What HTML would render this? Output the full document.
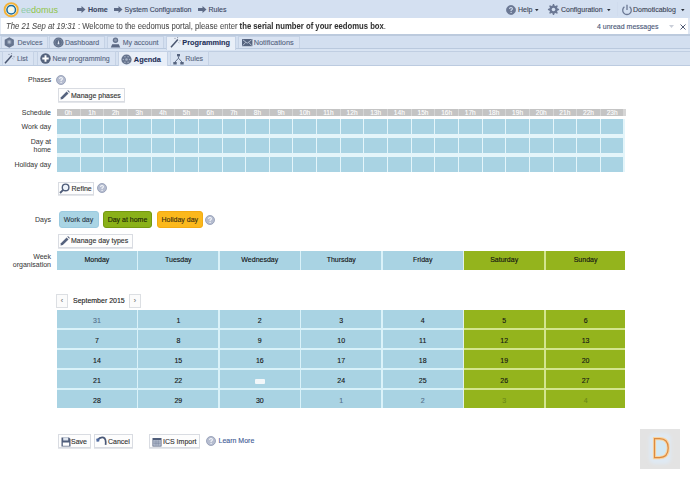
<!DOCTYPE html>
<html><head><meta charset="utf-8"><style>
*{box-sizing:border-box;margin:0;padding:0}
html,body{width:690px;height:479px;overflow:hidden;background:#fff}
body{position:relative;font-family:"Liberation Sans",sans-serif;font-size:7px;color:#333;-webkit-text-stroke:0.12px currentColor}
.a{position:absolute;white-space:nowrap}
svg{position:absolute;overflow:visible}
.tab{position:absolute;background:#d9e3f2;border:1px solid #c5d2e5;border-bottom:none;color:#55637f;-webkit-text-stroke:0.1px currentColor}
.tab span{position:absolute;top:2px;white-space:nowrap}
.tab.act{background:#e9eff8;color:#1f2f58;font-weight:bold}
.lbl{position:absolute;text-align:right;color:#3c3c3c;white-space:nowrap;right:639px;-webkit-text-stroke:0.05px currentColor}
.btn{position:absolute;height:14px;border:1px solid #d9dce2;background:#fdfdfd;color:#333;box-shadow:0 0.5px 0.5px #e4e6ea}
.btn span{position:absolute;top:2.5px;white-space:nowrap}
.help{position:absolute;width:10px;height:10px}
</style></head><body>
<div class="a" style="left:0;top:0;width:690px;height:18px;background:#d4e0f1"></div>
<svg style="left:3px;top:1.5px" width="16" height="16" viewBox="0 0 16 16"><circle cx="8.2" cy="7.7" r="6.6" fill="#fdf6e0" stroke="#f3b23a" stroke-width="1.9"/><circle cx="8.2" cy="7.7" r="4.3" fill="#e6f6fc" stroke="#1d6a9a" stroke-width="1.5"/><circle cx="8.2" cy="7.3" r="1.9" fill="#fff8d8"/></svg><div class="a" style="left:21px;top:4.8px;font-size:9px;color:#8fc449;letter-spacing:0px;-webkit-text-stroke:0"><span style="color:#8fcba6">ee</span>domus</div>
<svg style="left:77px;top:6px" width="9" height="7" viewBox="0 0 9 7"><path d="M0 2 H4.5 V0 L8.5 3.5 L4.5 7 V5 H0 Z" fill="#5d6a86"/></svg><div class="a" style="left:88px;top:5.6px;font-weight:bold;color:#3c4864;font-size:7.1px">Home</div>
<svg style="left:114px;top:6px" width="9" height="7" viewBox="0 0 9 7"><path d="M0 2 H4.5 V0 L8.5 3.5 L4.5 7 V5 H0 Z" fill="#5d6a86"/></svg><div class="a" style="left:124.5px;top:5.6px;color:#3c4864">System Configuration</div>
<svg style="left:198px;top:6px" width="9" height="7" viewBox="0 0 9 7"><path d="M0 2 H4.5 V0 L8.5 3.5 L4.5 7 V5 H0 Z" fill="#5d6a86"/></svg><div class="a" style="left:208.5px;top:5.6px;color:#3c4864">Rules</div>
<svg style="left:506.3px;top:4.800000000000001px" width="10" height="10" viewBox="0 0 10 10"><circle cx="5" cy="5" r="4.5" fill="#6b7894" stroke="#6b7894" stroke-width="0.8"/><path d="M3.6 3.9 Q3.6 2.5 5 2.5 Q6.4 2.5 6.4 3.7 Q6.4 4.5 5.4 4.9 L5.1 5.1 L5.1 6" fill="none" stroke="#d4e0f1" stroke-width="1.1"/><circle cx="5.1" cy="7.4" r="0.65" fill="#d4e0f1"/></svg><div class="a" style="left:518px;top:6px;color:#3d4556">Help</div>
<svg style="left:535.3px;top:9.2px" width="3.6" height="2.2" viewBox="0 0 4 2.5"><path d="M0 0 H4 L2 2.5 Z" fill="#2a2f3a"/></svg><svg style="left:547px;top:3px" width="13" height="13" viewBox="0 0 13 13"><path d="M12.07,5.95 L12.07,7.05 L10.36,7.67 L10.06,8.40 L10.83,10.05 L10.05,10.83 L8.40,10.06 L7.67,10.36 L7.05,12.07 L5.95,12.07 L5.33,10.36 L4.60,10.06 L2.95,10.83 L2.17,10.05 L2.94,8.40 L2.64,7.67 L0.93,7.05 L0.93,5.95 L2.64,5.33 L2.94,4.60 L2.17,2.95 L2.95,2.17 L4.60,2.94 L5.33,2.64 L5.95,0.93 L7.05,0.93 L7.67,2.64 L8.40,2.94 L10.05,2.17 L10.83,2.95 L10.06,4.60 L10.36,5.33 Z" fill="#6b7894"/><circle cx="6.5" cy="6.5" r="1.79" fill="#d4e0f1"/></svg><div class="a" style="left:561px;top:6px;color:#3d4556">Configuration</div>
<svg style="left:607.3px;top:9.2px" width="3.6" height="2.2" viewBox="0 0 4 2.5"><path d="M0 0 H4 L2 2.5 Z" fill="#2a2f3a"/></svg><div class="a" style="left:617px;top:2px;width:1px;height:14px;background:#d0dcee"></div>
<svg style="left:621px;top:3.5px" width="12" height="12" viewBox="0 0 12 12"><path d="M3.4 2.8 A4.3 4.3 0 1 0 8.6 2.8" fill="none" stroke="#6b7894" stroke-width="1.3"/><path d="M6 0.8 V6" stroke="#6b7894" stroke-width="1.3"/></svg><div class="a" style="left:633px;top:6px;color:#3d4556">Domoticablog</div>
<svg style="left:680.8px;top:9.2px" width="3.6" height="2.2" viewBox="0 0 4 2.5"><path d="M0 0 H4 L2 2.5 Z" fill="#2a2f3a"/></svg><div class="a" style="left:0;top:18px;width:690px;height:16.5px;background:#fff;border-left:1px solid #e4ebf5;border-right:2px solid #dfe7f3"></div>
<div class="a" style="left:6px;top:20.6px;color:#4a4a4a;font-size:8.35px;transform:scaleX(0.923);transform-origin:0 0;-webkit-text-stroke:0.05px currentColor"><i>The 21 Sep at 19:31</i> : Welcome to the eedomus portal, please enter <b style="color:#333">the serial number of your eedomus box</b>.</div>
<div class="a" style="left:597px;top:23px;color:#4a5878">4 unread messages</div>
<svg style="left:669px;top:25px" width="5" height="3" viewBox="0 0 5 3"><path d="M0 0 H5 L2.5 3 Z" fill="#c9ced8"/></svg><svg style="left:679.5px;top:23.5px" width="6" height="6" viewBox="0 0 6 6"><path d="M0.5 0.5 L5.5 5.5 M5.5 0.5 L0.5 5.5" stroke="#3c4864" stroke-width="0.9"/></svg><div class="a" style="left:0;top:34px;width:690px;height:1.5px;background:#bccadd"></div>
<div class="a" style="left:0;top:35.5px;width:690px;height:12.5px;background:#d3dff0"></div>
<div class="a" style="left:0;top:48px;width:690px;height:1.2px;background:#bac9de"></div>
<div class="a" style="left:0;top:49.2px;width:690px;height:1.6px;background:#d9e4f3"></div>
<div class="a" style="left:0;top:50.8px;width:690px;height:1.2px;background:#c0cee2"></div>
<div class="a" style="left:0;top:52px;width:690px;height:12.8px;background:#d6e1f0"></div>
<div class="a" style="left:0;top:64.8px;width:690px;height:1.5px;background:#bccbe0"></div>
<div class="tab" style="left:1px;top:36px;width:46.5px;height:12px"><svg style="left:2px;top:0.2px" width="11" height="11" viewBox="0 0 11 11"><path d="M5.3 0.2 L9.9 2.8 V8.2 L5.3 10.8 L0.7 8.2 V2.8 Z" fill="#66748e"/><path d="M3.2 3.6 L5.3 2.5 L7.4 3.6 V6.4 L5.3 7.6 L3.2 6.4 Z" fill="#8895ab"/><circle cx="5.3" cy="5" r="1.2" fill="#b4bfd0"/></svg><span style="left:15.5px;top:2px">Devices</span></div>
<div class="tab" style="left:49px;top:36px;width:55.5px;height:12px"><svg style="left:2.6px;top:0.3px" width="11" height="11" viewBox="0 0 11 11"><circle cx="5.5" cy="5.5" r="5.1" fill="#5f6e89"/><circle cx="5.5" cy="5.5" r="3.7" fill="none" stroke="#7f8ca4" stroke-width="0.7"/><path d="M4.5 7.2 L5.5 3 L6.5 7.2 Z" fill="#e3e9f3"/></svg><span style="left:14.9px;top:2px">Dashboard</span></div>
<div class="tab" style="left:107px;top:36px;width:57px;height:12px"><svg style="left:2.3px;top:0.2px" width="11" height="11" viewBox="0 0 11 11"><circle cx="5.5" cy="3.2" r="2.7" fill="#66748e"/><circle cx="5.5" cy="3.2" r="1.4" fill="#8e9ab0"/><path d="M0.8 10.6 L2.2 7.2 H8.8 L10.2 10.6 Z" fill="#5b6984"/></svg><span style="left:14.7px;top:2px">My account</span></div>
<div class="tab act" style="left:166px;top:36px;width:70px;height:14px"><svg style="left:3.2px;top:0px" width="11" height="11" viewBox="0 0 11 11"><path d="M1 10.2 L7.8 2.6" stroke="#4a5670" stroke-width="1.5"/><path d="M4.4 1.4 H5.6 M7.6 0 V1.2 M9.4 3.8 H10.6 M8.6 5.4 L9.4 6.2" stroke="#4a5670" stroke-width="0.9" opacity="0.6"/></svg><span style="left:15.3px;top:1.1px;font-size:7.35px">Programming</span></div>
<div class="tab" style="left:238px;top:36px;width:62px;height:12px"><svg style="left:3.3px;top:1.6px" width="11" height="8" viewBox="0 0 11 8"><rect x="0" y="0" width="10.4" height="7.2" fill="#56647f"/><path d="M0.8 0.8 L5.2 4.2 L9.6 0.8 M0.8 6.5 L3.8 3.3 M9.6 6.5 L6.6 3.3" fill="none" stroke="#c8d2e2" stroke-width="0.8"/></svg><span style="left:14.7px;top:1.4px;font-size:7.35px">Notifications</span></div>
<div class="tab" style="left:1.5px;top:51.3px;width:32.5px;height:13.5px"><svg style="left:1.7px;top:1.0px" width="11" height="11" viewBox="0 0 11 11"><path d="M1 10.2 L7.8 2.6" stroke="#4a5670" stroke-width="1.5"/><path d="M4.4 1.4 H5.6 M7.6 0 V1.2 M9.4 3.8 H10.6 M8.6 5.4 L9.4 6.2" stroke="#4a5670" stroke-width="0.9" opacity="0.6"/></svg><span style="left:14.4px;top:3.1px">List</span></div>
<div class="tab" style="left:36.5px;top:51.3px;width:79px;height:13.5px"><svg style="left:2.6px;top:0.7px" width="11" height="11" viewBox="0 0 11 11"><circle cx="5.5" cy="5.5" r="5.2" fill="#55637d"/><path d="M5.5 2.3 V8.7 M2.3 5.5 H8.7" stroke="#fff" stroke-width="1.9"/></svg><span style="left:15px;top:3.1px">New programming</span></div>
<div class="tab act" style="left:118px;top:51.3px;width:49.5px;height:14.5px"><svg style="left:2px;top:1.3px" width="11" height="11" viewBox="0 0 11 11"><circle cx="5.5" cy="5.5" r="5.1" fill="#66748e"/><circle cx="8.60" cy="5.50" r="0.75" fill="#a6b1c4"/><circle cx="7.05" cy="8.18" r="0.75" fill="#a6b1c4"/><circle cx="3.95" cy="8.18" r="0.75" fill="#a6b1c4"/><circle cx="2.40" cy="5.50" r="0.75" fill="#a6b1c4"/><circle cx="3.95" cy="2.82" r="0.75" fill="#a6b1c4"/><circle cx="7.05" cy="2.82" r="0.75" fill="#a6b1c4"/><circle cx="5.5" cy="5.5" r="1.3" fill="#a6b1c4"/></svg><span style="left:14.8px;top:3.1px;font-size:7.4px">Agenda</span></div>
<div class="tab" style="left:170px;top:51.3px;width:39px;height:13.5px"><svg style="left:2.2px;top:1.3px" width="11" height="11" viewBox="0 0 11 11"><rect x="4" y="0" width="3" height="2.4" fill="#56647f"/><path d="M5.5 2.4 V4.2 M5.5 4.2 L2 8 M5.5 4.2 L9 8" stroke="#56647f" stroke-width="0.9" fill="none"/><rect x="0.3" y="8" width="3.4" height="2.5" fill="#56647f"/><rect x="7.3" y="8" width="3.4" height="2.5" fill="#56647f"/></svg><span style="left:14.2px;top:3.1px">Rules</span></div>
<div class="a" style="left:28px;top:75.5px;color:#3c3c3c;-webkit-text-stroke:0.05px currentColor">Phases</div>
<svg style="left:56.2px;top:74.6px" width="10" height="10" viewBox="0 0 10 10"><circle cx="5" cy="5" r="4.5" fill="#b6bdd0" stroke="#8e98b1" stroke-width="0.8"/><path d="M3.6 3.9 Q3.6 2.5 5 2.5 Q6.4 2.5 6.4 3.7 Q6.4 4.5 5.4 4.9 L5.1 5.1 L5.1 6" fill="none" stroke="#f6f8fb" stroke-width="1.1"/><circle cx="5.1" cy="7.4" r="0.65" fill="#f6f8fb"/></svg><div class="btn" style="left:57.5px;top:88px;width:67px;height:13.5px"><svg style="left:1.2px;top:1.2px" width="10" height="10" viewBox="0 0 10 10"><path d="M0.6 9.4 L0.9 7.2 L6.6 1.5 L8.5 3.4 L2.8 9.1 Z" fill="#56637e"/><path d="M7.3 0.8 L8.0 0.1 L9.9 2.0 L9.2 2.7 Z" fill="#56637e"/></svg><span style="left:12.5px">Manage phases</span></div>
<div class="lbl" style="top:108.5px">Schedule</div><div class="lbl" style="top:123px">Work day</div><div class="lbl" style="top:137.8px;line-height:8.2px">Day at<br>home</div><div class="lbl" style="top:161px">Holiday day</div><div class="a" style="left:57px;top:108.5px;width:568.5px;height:7.5px;background:#d6d6d6"></div>
<div class="a" style="left:57.00px;top:108.5px;width:22.65px;height:7.5px;background:#c4c4c4;color:#fff;font-size:6.6px;text-align:center;line-height:8.6px;overflow:hidden;-webkit-text-stroke:0.1px #fff">0h</div>
<div class="a" style="left:80.65px;top:108.5px;width:22.65px;height:7.5px;background:#c4c4c4;color:#fff;font-size:6.6px;text-align:center;line-height:8.6px;overflow:hidden;-webkit-text-stroke:0.1px #fff">1h</div>
<div class="a" style="left:104.29px;top:108.5px;width:22.65px;height:7.5px;background:#c4c4c4;color:#fff;font-size:6.6px;text-align:center;line-height:8.6px;overflow:hidden;-webkit-text-stroke:0.1px #fff">2h</div>
<div class="a" style="left:127.94px;top:108.5px;width:22.65px;height:7.5px;background:#c4c4c4;color:#fff;font-size:6.6px;text-align:center;line-height:8.6px;overflow:hidden;-webkit-text-stroke:0.1px #fff">3h</div>
<div class="a" style="left:151.58px;top:108.5px;width:22.65px;height:7.5px;background:#c4c4c4;color:#fff;font-size:6.6px;text-align:center;line-height:8.6px;overflow:hidden;-webkit-text-stroke:0.1px #fff">4h</div>
<div class="a" style="left:175.23px;top:108.5px;width:22.65px;height:7.5px;background:#c4c4c4;color:#fff;font-size:6.6px;text-align:center;line-height:8.6px;overflow:hidden;-webkit-text-stroke:0.1px #fff">5h</div>
<div class="a" style="left:198.88px;top:108.5px;width:22.65px;height:7.5px;background:#c4c4c4;color:#fff;font-size:6.6px;text-align:center;line-height:8.6px;overflow:hidden;-webkit-text-stroke:0.1px #fff">6h</div>
<div class="a" style="left:222.52px;top:108.5px;width:22.65px;height:7.5px;background:#c4c4c4;color:#fff;font-size:6.6px;text-align:center;line-height:8.6px;overflow:hidden;-webkit-text-stroke:0.1px #fff">7h</div>
<div class="a" style="left:246.17px;top:108.5px;width:22.65px;height:7.5px;background:#c4c4c4;color:#fff;font-size:6.6px;text-align:center;line-height:8.6px;overflow:hidden;-webkit-text-stroke:0.1px #fff">8h</div>
<div class="a" style="left:269.81px;top:108.5px;width:22.65px;height:7.5px;background:#c4c4c4;color:#fff;font-size:6.6px;text-align:center;line-height:8.6px;overflow:hidden;-webkit-text-stroke:0.1px #fff">9h</div>
<div class="a" style="left:293.46px;top:108.5px;width:22.65px;height:7.5px;background:#c4c4c4;color:#fff;font-size:6.6px;text-align:center;line-height:8.6px;overflow:hidden;-webkit-text-stroke:0.1px #fff">10h</div>
<div class="a" style="left:317.10px;top:108.5px;width:22.65px;height:7.5px;background:#c4c4c4;color:#fff;font-size:6.6px;text-align:center;line-height:8.6px;overflow:hidden;-webkit-text-stroke:0.1px #fff">11h</div>
<div class="a" style="left:340.75px;top:108.5px;width:22.65px;height:7.5px;background:#c4c4c4;color:#fff;font-size:6.6px;text-align:center;line-height:8.6px;overflow:hidden;-webkit-text-stroke:0.1px #fff">12h</div>
<div class="a" style="left:364.40px;top:108.5px;width:22.65px;height:7.5px;background:#c4c4c4;color:#fff;font-size:6.6px;text-align:center;line-height:8.6px;overflow:hidden;-webkit-text-stroke:0.1px #fff">13h</div>
<div class="a" style="left:388.04px;top:108.5px;width:22.65px;height:7.5px;background:#c4c4c4;color:#fff;font-size:6.6px;text-align:center;line-height:8.6px;overflow:hidden;-webkit-text-stroke:0.1px #fff">14h</div>
<div class="a" style="left:411.69px;top:108.5px;width:22.65px;height:7.5px;background:#c4c4c4;color:#fff;font-size:6.6px;text-align:center;line-height:8.6px;overflow:hidden;-webkit-text-stroke:0.1px #fff">15h</div>
<div class="a" style="left:435.33px;top:108.5px;width:22.65px;height:7.5px;background:#c4c4c4;color:#fff;font-size:6.6px;text-align:center;line-height:8.6px;overflow:hidden;-webkit-text-stroke:0.1px #fff">16h</div>
<div class="a" style="left:458.98px;top:108.5px;width:22.65px;height:7.5px;background:#c4c4c4;color:#fff;font-size:6.6px;text-align:center;line-height:8.6px;overflow:hidden;-webkit-text-stroke:0.1px #fff">17h</div>
<div class="a" style="left:482.62px;top:108.5px;width:22.65px;height:7.5px;background:#c4c4c4;color:#fff;font-size:6.6px;text-align:center;line-height:8.6px;overflow:hidden;-webkit-text-stroke:0.1px #fff">18h</div>
<div class="a" style="left:506.27px;top:108.5px;width:22.65px;height:7.5px;background:#c4c4c4;color:#fff;font-size:6.6px;text-align:center;line-height:8.6px;overflow:hidden;-webkit-text-stroke:0.1px #fff">19h</div>
<div class="a" style="left:529.92px;top:108.5px;width:22.65px;height:7.5px;background:#c4c4c4;color:#fff;font-size:6.6px;text-align:center;line-height:8.6px;overflow:hidden;-webkit-text-stroke:0.1px #fff">20h</div>
<div class="a" style="left:553.56px;top:108.5px;width:22.65px;height:7.5px;background:#c4c4c4;color:#fff;font-size:6.6px;text-align:center;line-height:8.6px;overflow:hidden;-webkit-text-stroke:0.1px #fff">21h</div>
<div class="a" style="left:577.21px;top:108.5px;width:22.65px;height:7.5px;background:#c4c4c4;color:#fff;font-size:6.6px;text-align:center;line-height:8.6px;overflow:hidden;-webkit-text-stroke:0.1px #fff">22h</div>
<div class="a" style="left:600.85px;top:108.5px;width:22.65px;height:7.5px;background:#c4c4c4;color:#fff;font-size:6.6px;text-align:center;line-height:8.6px;overflow:hidden;-webkit-text-stroke:0.1px #fff">23h</div>
<div class="a" style="left:57px;top:118.8px;width:567.5px;height:53.2px;background:#e4f5fa"></div>
<div class="a" style="left:57.00px;top:118.9px;width:22.65px;height:15.4px;background:#a9d3e3"></div>
<div class="a" style="left:80.65px;top:118.9px;width:22.65px;height:15.4px;background:#a9d3e3"></div>
<div class="a" style="left:104.29px;top:118.9px;width:22.65px;height:15.4px;background:#a9d3e3"></div>
<div class="a" style="left:127.94px;top:118.9px;width:22.65px;height:15.4px;background:#a9d3e3"></div>
<div class="a" style="left:151.58px;top:118.9px;width:22.65px;height:15.4px;background:#a9d3e3"></div>
<div class="a" style="left:175.23px;top:118.9px;width:22.65px;height:15.4px;background:#a9d3e3"></div>
<div class="a" style="left:198.88px;top:118.9px;width:22.65px;height:15.4px;background:#a9d3e3"></div>
<div class="a" style="left:222.52px;top:118.9px;width:22.65px;height:15.4px;background:#a9d3e3"></div>
<div class="a" style="left:246.17px;top:118.9px;width:22.65px;height:15.4px;background:#a9d3e3"></div>
<div class="a" style="left:269.81px;top:118.9px;width:22.65px;height:15.4px;background:#a9d3e3"></div>
<div class="a" style="left:293.46px;top:118.9px;width:22.65px;height:15.4px;background:#a9d3e3"></div>
<div class="a" style="left:317.10px;top:118.9px;width:22.65px;height:15.4px;background:#a9d3e3"></div>
<div class="a" style="left:340.75px;top:118.9px;width:22.65px;height:15.4px;background:#a9d3e3"></div>
<div class="a" style="left:364.40px;top:118.9px;width:22.65px;height:15.4px;background:#a9d3e3"></div>
<div class="a" style="left:388.04px;top:118.9px;width:22.65px;height:15.4px;background:#a9d3e3"></div>
<div class="a" style="left:411.69px;top:118.9px;width:22.65px;height:15.4px;background:#a9d3e3"></div>
<div class="a" style="left:435.33px;top:118.9px;width:22.65px;height:15.4px;background:#a9d3e3"></div>
<div class="a" style="left:458.98px;top:118.9px;width:22.65px;height:15.4px;background:#a9d3e3"></div>
<div class="a" style="left:482.62px;top:118.9px;width:22.65px;height:15.4px;background:#a9d3e3"></div>
<div class="a" style="left:506.27px;top:118.9px;width:22.65px;height:15.4px;background:#a9d3e3"></div>
<div class="a" style="left:529.92px;top:118.9px;width:22.65px;height:15.4px;background:#a9d3e3"></div>
<div class="a" style="left:553.56px;top:118.9px;width:22.65px;height:15.4px;background:#a9d3e3"></div>
<div class="a" style="left:577.21px;top:118.9px;width:22.65px;height:15.4px;background:#a9d3e3"></div>
<div class="a" style="left:600.85px;top:118.9px;width:22.65px;height:15.4px;background:#a9d3e3"></div>
<div class="a" style="left:57.00px;top:137.8px;width:22.65px;height:15.4px;background:#a9d3e3"></div>
<div class="a" style="left:80.65px;top:137.8px;width:22.65px;height:15.4px;background:#a9d3e3"></div>
<div class="a" style="left:104.29px;top:137.8px;width:22.65px;height:15.4px;background:#a9d3e3"></div>
<div class="a" style="left:127.94px;top:137.8px;width:22.65px;height:15.4px;background:#a9d3e3"></div>
<div class="a" style="left:151.58px;top:137.8px;width:22.65px;height:15.4px;background:#a9d3e3"></div>
<div class="a" style="left:175.23px;top:137.8px;width:22.65px;height:15.4px;background:#a9d3e3"></div>
<div class="a" style="left:198.88px;top:137.8px;width:22.65px;height:15.4px;background:#a9d3e3"></div>
<div class="a" style="left:222.52px;top:137.8px;width:22.65px;height:15.4px;background:#a9d3e3"></div>
<div class="a" style="left:246.17px;top:137.8px;width:22.65px;height:15.4px;background:#a9d3e3"></div>
<div class="a" style="left:269.81px;top:137.8px;width:22.65px;height:15.4px;background:#a9d3e3"></div>
<div class="a" style="left:293.46px;top:137.8px;width:22.65px;height:15.4px;background:#a9d3e3"></div>
<div class="a" style="left:317.10px;top:137.8px;width:22.65px;height:15.4px;background:#a9d3e3"></div>
<div class="a" style="left:340.75px;top:137.8px;width:22.65px;height:15.4px;background:#a9d3e3"></div>
<div class="a" style="left:364.40px;top:137.8px;width:22.65px;height:15.4px;background:#a9d3e3"></div>
<div class="a" style="left:388.04px;top:137.8px;width:22.65px;height:15.4px;background:#a9d3e3"></div>
<div class="a" style="left:411.69px;top:137.8px;width:22.65px;height:15.4px;background:#a9d3e3"></div>
<div class="a" style="left:435.33px;top:137.8px;width:22.65px;height:15.4px;background:#a9d3e3"></div>
<div class="a" style="left:458.98px;top:137.8px;width:22.65px;height:15.4px;background:#a9d3e3"></div>
<div class="a" style="left:482.62px;top:137.8px;width:22.65px;height:15.4px;background:#a9d3e3"></div>
<div class="a" style="left:506.27px;top:137.8px;width:22.65px;height:15.4px;background:#a9d3e3"></div>
<div class="a" style="left:529.92px;top:137.8px;width:22.65px;height:15.4px;background:#a9d3e3"></div>
<div class="a" style="left:553.56px;top:137.8px;width:22.65px;height:15.4px;background:#a9d3e3"></div>
<div class="a" style="left:577.21px;top:137.8px;width:22.65px;height:15.4px;background:#a9d3e3"></div>
<div class="a" style="left:600.85px;top:137.8px;width:22.65px;height:15.4px;background:#a9d3e3"></div>
<div class="a" style="left:57.00px;top:156.6px;width:22.65px;height:15.4px;background:#a9d3e3"></div>
<div class="a" style="left:80.65px;top:156.6px;width:22.65px;height:15.4px;background:#a9d3e3"></div>
<div class="a" style="left:104.29px;top:156.6px;width:22.65px;height:15.4px;background:#a9d3e3"></div>
<div class="a" style="left:127.94px;top:156.6px;width:22.65px;height:15.4px;background:#a9d3e3"></div>
<div class="a" style="left:151.58px;top:156.6px;width:22.65px;height:15.4px;background:#a9d3e3"></div>
<div class="a" style="left:175.23px;top:156.6px;width:22.65px;height:15.4px;background:#a9d3e3"></div>
<div class="a" style="left:198.88px;top:156.6px;width:22.65px;height:15.4px;background:#a9d3e3"></div>
<div class="a" style="left:222.52px;top:156.6px;width:22.65px;height:15.4px;background:#a9d3e3"></div>
<div class="a" style="left:246.17px;top:156.6px;width:22.65px;height:15.4px;background:#a9d3e3"></div>
<div class="a" style="left:269.81px;top:156.6px;width:22.65px;height:15.4px;background:#a9d3e3"></div>
<div class="a" style="left:293.46px;top:156.6px;width:22.65px;height:15.4px;background:#a9d3e3"></div>
<div class="a" style="left:317.10px;top:156.6px;width:22.65px;height:15.4px;background:#a9d3e3"></div>
<div class="a" style="left:340.75px;top:156.6px;width:22.65px;height:15.4px;background:#a9d3e3"></div>
<div class="a" style="left:364.40px;top:156.6px;width:22.65px;height:15.4px;background:#a9d3e3"></div>
<div class="a" style="left:388.04px;top:156.6px;width:22.65px;height:15.4px;background:#a9d3e3"></div>
<div class="a" style="left:411.69px;top:156.6px;width:22.65px;height:15.4px;background:#a9d3e3"></div>
<div class="a" style="left:435.33px;top:156.6px;width:22.65px;height:15.4px;background:#a9d3e3"></div>
<div class="a" style="left:458.98px;top:156.6px;width:22.65px;height:15.4px;background:#a9d3e3"></div>
<div class="a" style="left:482.62px;top:156.6px;width:22.65px;height:15.4px;background:#a9d3e3"></div>
<div class="a" style="left:506.27px;top:156.6px;width:22.65px;height:15.4px;background:#a9d3e3"></div>
<div class="a" style="left:529.92px;top:156.6px;width:22.65px;height:15.4px;background:#a9d3e3"></div>
<div class="a" style="left:553.56px;top:156.6px;width:22.65px;height:15.4px;background:#a9d3e3"></div>
<div class="a" style="left:577.21px;top:156.6px;width:22.65px;height:15.4px;background:#a9d3e3"></div>
<div class="a" style="left:600.85px;top:156.6px;width:22.65px;height:15.4px;background:#a9d3e3"></div>
<div class="btn" style="left:57.5px;top:181.5px;width:36.5px;height:13.5px"><svg style="left:0.9px;top:0.6px" width="11" height="11" viewBox="0 0 11 11"><circle cx="6.6" cy="4.4" r="3.3" fill="#eef3fa" stroke="#4f5d7a" stroke-width="1.4"/><path d="M4.2 6.8 L1 10" stroke="#4f5d7a" stroke-width="1.9"/></svg><span style="left:13px">Refine</span></div>
<svg style="left:96.7px;top:183.2px" width="10" height="10" viewBox="0 0 10 10"><circle cx="5" cy="5" r="4.5" fill="#b6bdd0" stroke="#8e98b1" stroke-width="0.8"/><path d="M3.6 3.9 Q3.6 2.5 5 2.5 Q6.4 2.5 6.4 3.7 Q6.4 4.5 5.4 4.9 L5.1 5.1 L5.1 6" fill="none" stroke="#f6f8fb" stroke-width="1.1"/><circle cx="5.1" cy="7.4" r="0.65" fill="#f6f8fb"/></svg><div class="lbl" style="top:215.5px">Days</div><div class="a" style="left:58.5px;top:210.5px;width:40px;height:17px;border-radius:3px;background:#a9d4e4;border:1px solid #9ccbe0;text-align:center;line-height:15px;color:#2c3a48">Work day</div>
<div class="a" style="left:103px;top:210.5px;width:49px;height:17px;border-radius:3px;background:#8ab118;border:1px solid #76990f;text-align:center;line-height:15px;color:#1c2606">Day at home</div>
<div class="a" style="left:156.5px;top:210.5px;width:46.5px;height:17px;border-radius:3px;background:#fbb81c;border:1px solid #f3ab12;text-align:center;line-height:15px;color:#3a2e10">Holiday day</div>
<svg style="left:205px;top:214.7px" width="10" height="10" viewBox="0 0 10 10"><circle cx="5" cy="5" r="4.5" fill="#b6bdd0" stroke="#8e98b1" stroke-width="0.8"/><path d="M3.6 3.9 Q3.6 2.5 5 2.5 Q6.4 2.5 6.4 3.7 Q6.4 4.5 5.4 4.9 L5.1 5.1 L5.1 6" fill="none" stroke="#f6f8fb" stroke-width="1.1"/><circle cx="5.1" cy="7.4" r="0.65" fill="#f6f8fb"/></svg><div class="btn" style="left:57.5px;top:233.5px;width:75px;height:14px"><svg style="left:1.2px;top:1.5px" width="10" height="10" viewBox="0 0 10 10"><path d="M0.6 9.4 L0.9 7.2 L6.6 1.5 L8.5 3.4 L2.8 9.1 Z" fill="#56637e"/><path d="M7.3 0.8 L8.0 0.1 L9.9 2.0 L9.2 2.7 Z" fill="#56637e"/></svg><span style="left:12.5px">Manage day types</span></div>
<div class="lbl" style="top:252.5px;line-height:8.3px">Week<br>organisation</div><div class="a" style="left:56.50px;top:251px;width:81.95px;height:18.7px;background:#daf2f9"></div>
<div class="a" style="left:137.95px;top:251px;width:81.95px;height:18.7px;background:#daf2f9"></div>
<div class="a" style="left:219.40px;top:251px;width:81.95px;height:18.7px;background:#daf2f9"></div>
<div class="a" style="left:300.85px;top:251px;width:81.95px;height:18.7px;background:#daf2f9"></div>
<div class="a" style="left:382.30px;top:251px;width:81.95px;height:18.7px;background:#daf2f9"></div>
<div class="a" style="left:463.75px;top:251px;width:81.95px;height:18.7px;background:#d3e58f"></div>
<div class="a" style="left:545.20px;top:251px;width:79.90px;height:18.7px;background:#d3e58f"></div>
<div class="a" style="left:462.6px;top:251px;width:1.6px;height:18.7px;background:#e4f2e8"></div>
<div class="a" style="left:57.00px;top:251px;width:79.8px;height:18.7px;background:#a9d3e3;text-align:center;line-height:18px;color:#111">Monday</div>
<div class="a" style="left:138.45px;top:251px;width:79.8px;height:18.7px;background:#a9d3e3;text-align:center;line-height:18px;color:#111">Tuesday</div>
<div class="a" style="left:219.90px;top:251px;width:79.8px;height:18.7px;background:#a9d3e3;text-align:center;line-height:18px;color:#111">Wednesday</div>
<div class="a" style="left:301.35px;top:251px;width:79.8px;height:18.7px;background:#a9d3e3;text-align:center;line-height:18px;color:#111">Thursday</div>
<div class="a" style="left:382.80px;top:251px;width:79.8px;height:18.7px;background:#a9d3e3;text-align:center;line-height:18px;color:#111">Friday</div>
<div class="a" style="left:464.25px;top:251px;width:79.8px;height:18.7px;background:#94b41d;text-align:center;line-height:18px;color:#111">Saturday</div>
<div class="a" style="left:545.70px;top:251px;width:79.8px;height:18.7px;background:#94b41d;text-align:center;line-height:18px;color:#111">Sunday</div>
<div class="a" style="left:56px;top:294px;width:11.7px;height:13.8px;border:1px solid #dcdfe3;background:#fbfbfb;color:#777;text-align:center;line-height:12px;font-size:7px">&lsaquo;</div>
<div class="a" style="left:73px;top:297px;color:#222">September 2015</div>
<div class="a" style="left:129px;top:294px;width:11.7px;height:13.8px;border:1px solid #dcdfe3;background:#fbfbfb;color:#777;text-align:center;line-height:12px;font-size:7px">&rsaquo;</div>
<div class="a" style="left:56.50px;top:309.6px;width:81.95px;height:98.8px;background:#daf2f9"></div>
<div class="a" style="left:137.95px;top:309.6px;width:81.95px;height:98.8px;background:#daf2f9"></div>
<div class="a" style="left:219.40px;top:309.6px;width:81.95px;height:98.8px;background:#daf2f9"></div>
<div class="a" style="left:300.85px;top:309.6px;width:81.95px;height:98.8px;background:#daf2f9"></div>
<div class="a" style="left:382.30px;top:309.6px;width:81.95px;height:98.8px;background:#daf2f9"></div>
<div class="a" style="left:463.75px;top:309.6px;width:81.95px;height:98.8px;background:#d3e58f"></div>
<div class="a" style="left:545.20px;top:309.6px;width:79.90px;height:98.8px;background:#d3e58f"></div>
<div class="a" style="left:462.6px;top:309.6px;width:1.6px;height:98.8px;background:#e4f2e8"></div>
<div class="a" style="left:57.00px;top:309.60px;width:79.8px;height:18.3px;background:#a9d3e3;text-align:center;line-height:22.4px;color:#55708a">31</div>
<div class="a" style="left:138.45px;top:309.60px;width:79.8px;height:18.3px;background:#a9d3e3;text-align:center;line-height:22.4px;color:#151515">1</div>
<div class="a" style="left:219.90px;top:309.60px;width:79.8px;height:18.3px;background:#a9d3e3;text-align:center;line-height:22.4px;color:#151515">2</div>
<div class="a" style="left:301.35px;top:309.60px;width:79.8px;height:18.3px;background:#a9d3e3;text-align:center;line-height:22.4px;color:#151515">3</div>
<div class="a" style="left:382.80px;top:309.60px;width:79.8px;height:18.3px;background:#a9d3e3;text-align:center;line-height:22.4px;color:#151515">4</div>
<div class="a" style="left:464.25px;top:309.60px;width:79.8px;height:18.3px;background:#94b41d;text-align:center;line-height:22.4px;color:#151515">5</div>
<div class="a" style="left:545.70px;top:309.60px;width:79.8px;height:18.3px;background:#94b41d;text-align:center;line-height:22.4px;color:#151515">6</div>
<div class="a" style="left:57.00px;top:329.72px;width:79.8px;height:18.3px;background:#a9d3e3;text-align:center;line-height:22.4px;color:#151515">7</div>
<div class="a" style="left:138.45px;top:329.72px;width:79.8px;height:18.3px;background:#a9d3e3;text-align:center;line-height:22.4px;color:#151515">8</div>
<div class="a" style="left:219.90px;top:329.72px;width:79.8px;height:18.3px;background:#a9d3e3;text-align:center;line-height:22.4px;color:#151515">9</div>
<div class="a" style="left:301.35px;top:329.72px;width:79.8px;height:18.3px;background:#a9d3e3;text-align:center;line-height:22.4px;color:#151515">10</div>
<div class="a" style="left:382.80px;top:329.72px;width:79.8px;height:18.3px;background:#a9d3e3;text-align:center;line-height:22.4px;color:#151515">11</div>
<div class="a" style="left:464.25px;top:329.72px;width:79.8px;height:18.3px;background:#94b41d;text-align:center;line-height:22.4px;color:#151515">12</div>
<div class="a" style="left:545.70px;top:329.72px;width:79.8px;height:18.3px;background:#94b41d;text-align:center;line-height:22.4px;color:#151515">13</div>
<div class="a" style="left:57.00px;top:349.84px;width:79.8px;height:18.3px;background:#a9d3e3;text-align:center;line-height:22.4px;color:#151515">14</div>
<div class="a" style="left:138.45px;top:349.84px;width:79.8px;height:18.3px;background:#a9d3e3;text-align:center;line-height:22.4px;color:#151515">15</div>
<div class="a" style="left:219.90px;top:349.84px;width:79.8px;height:18.3px;background:#a9d3e3;text-align:center;line-height:22.4px;color:#151515">16</div>
<div class="a" style="left:301.35px;top:349.84px;width:79.8px;height:18.3px;background:#a9d3e3;text-align:center;line-height:22.4px;color:#151515">17</div>
<div class="a" style="left:382.80px;top:349.84px;width:79.8px;height:18.3px;background:#a9d3e3;text-align:center;line-height:22.4px;color:#151515">18</div>
<div class="a" style="left:464.25px;top:349.84px;width:79.8px;height:18.3px;background:#94b41d;text-align:center;line-height:22.4px;color:#151515">19</div>
<div class="a" style="left:545.70px;top:349.84px;width:79.8px;height:18.3px;background:#94b41d;text-align:center;line-height:22.4px;color:#151515">20</div>
<div class="a" style="left:57.00px;top:369.96px;width:79.8px;height:18.3px;background:#a9d3e3;text-align:center;line-height:22.4px;color:#151515">21</div>
<div class="a" style="left:138.45px;top:369.96px;width:79.8px;height:18.3px;background:#a9d3e3;text-align:center;line-height:22.4px;color:#151515">22</div>
<div class="a" style="left:219.90px;top:369.96px;width:79.8px;height:18.3px;background:#a9d3e3;text-align:center;line-height:22.4px;color:#151515"><span style="display:inline-block;width:10px;height:5px;background:#f2f7fa;vertical-align:middle;border-radius:1px"></span></div>
<div class="a" style="left:301.35px;top:369.96px;width:79.8px;height:18.3px;background:#a9d3e3;text-align:center;line-height:22.4px;color:#151515">24</div>
<div class="a" style="left:382.80px;top:369.96px;width:79.8px;height:18.3px;background:#a9d3e3;text-align:center;line-height:22.4px;color:#151515">25</div>
<div class="a" style="left:464.25px;top:369.96px;width:79.8px;height:18.3px;background:#94b41d;text-align:center;line-height:22.4px;color:#151515">26</div>
<div class="a" style="left:545.70px;top:369.96px;width:79.8px;height:18.3px;background:#94b41d;text-align:center;line-height:22.4px;color:#151515">27</div>
<div class="a" style="left:57.00px;top:390.08px;width:79.8px;height:18.3px;background:#a9d3e3;text-align:center;line-height:22.4px;color:#151515">28</div>
<div class="a" style="left:138.45px;top:390.08px;width:79.8px;height:18.3px;background:#a9d3e3;text-align:center;line-height:22.4px;color:#151515">29</div>
<div class="a" style="left:219.90px;top:390.08px;width:79.8px;height:18.3px;background:#a9d3e3;text-align:center;line-height:22.4px;color:#151515">30</div>
<div class="a" style="left:301.35px;top:390.08px;width:79.8px;height:18.3px;background:#a9d3e3;text-align:center;line-height:22.4px;color:#55708a">1</div>
<div class="a" style="left:382.80px;top:390.08px;width:79.8px;height:18.3px;background:#a9d3e3;text-align:center;line-height:22.4px;color:#55708a">2</div>
<div class="a" style="left:464.25px;top:390.08px;width:79.8px;height:18.3px;background:#94b41d;text-align:center;line-height:22.4px;color:#6c8a1a">3</div>
<div class="a" style="left:545.70px;top:390.08px;width:79.8px;height:18.3px;background:#94b41d;text-align:center;line-height:22.4px;color:#6c8a1a">4</div>
<div class="btn" style="left:57.5px;top:434px;width:33px;height:14px"><svg style="left:2px;top:1.5px" width="10" height="10" viewBox="0 0 10 10"><path d="M0.5 0.5 H8 L9.5 2 V9.5 H0.5 Z" fill="#4f5d7a"/><rect x="2.2" y="0.5" width="5" height="3" fill="#dfe5ef"/><rect x="1.8" y="5.5" width="6.4" height="3.3" fill="#fff"/></svg><span style="left:12.5px">Save</span></div>
<div class="btn" style="left:94px;top:434px;width:39px;height:14px"><svg style="left:1px;top:1.3px" width="11" height="10" viewBox="0 0 11 10"><path d="M1.2 4.2 Q4.2 0.6 7.6 1.6 Q10.3 2.8 9.6 8.8" fill="none" stroke="#4a5877" stroke-width="1.7"/><path d="M0.2 2.8 L3.6 2.2 L3.2 5.6 L0.6 5.8 Z" fill="#4f6ba0"/></svg><span style="left:13px">Cancel</span></div>
<div class="btn" style="left:149px;top:434px;width:51px;height:14px"><svg style="left:2px;top:1.5px" width="10" height="10" viewBox="0 0 10 10"><rect x="0.5" y="1" width="9" height="8.5" fill="#4f5d7a"/><rect x="1.3" y="3.2" width="7.4" height="5.5" fill="#dbe2ee"/><path d="M1.3 5 H8.7 M1.3 6.8 H8.7 M3.1 3.2 V8.7 M4.95 3.2 V8.7 M6.8 3.2 V8.7" stroke="#4f5d7a" stroke-width="0.5"/></svg><span style="left:13px">ICS Import</span></div>
<svg style="left:206.3px;top:435.6px" width="10" height="10" viewBox="0 0 10 10"><circle cx="5" cy="5" r="4.5" fill="#b6bdd0" stroke="#8e98b1" stroke-width="0.8"/><path d="M3.6 3.9 Q3.6 2.5 5 2.5 Q6.4 2.5 6.4 3.7 Q6.4 4.5 5.4 4.9 L5.1 5.1 L5.1 6" fill="none" stroke="#f6f8fb" stroke-width="1.1"/><circle cx="5.1" cy="7.4" r="0.65" fill="#f6f8fb"/></svg><div class="a" style="left:218.5px;top:437px;color:#3f5c96">Learn More</div>
<div class="a" style="left:640px;top:429px;width:40px;height:40px;background:#e3e3e3"></div>
<svg style="left:640px;top:429px" width="40" height="40" viewBox="0 0 40 40"><defs><filter id="bl" x="-50%" y="-50%" width="200%" height="200%"><feGaussianBlur stdDeviation="1.6"/></filter></defs><rect x="9" y="4" width="22" height="31" rx="6" fill="#dfe9f3" filter="url(#bl)"/><path d="M14.5 9.7 H19.5 Q28.2 9.7 28.2 19.1 Q28.2 28.6 19.5 28.6 H14.5 Z" fill="#d3e9f5" stroke="#fbd5a0" stroke-width="3.2"/><path d="M14.5 9.7 H19.5 Q28.2 9.7 28.2 19.1 Q28.2 28.6 19.5 28.6 H14.5 Z" fill="none" stroke="#d98a44" stroke-width="1.2"/></svg></body></html>
